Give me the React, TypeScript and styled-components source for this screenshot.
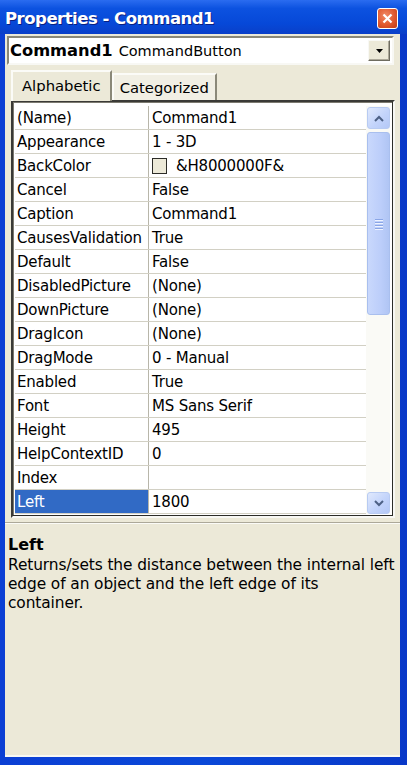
import { createGlobalStyle } from "styled-components";
import styled from "styled-components";

const GlobalStyle = createGlobalStyle`
  html, body {
    margin: 0;
    padding: 0;
    background: #0831d9;
  }
  * {
    box-sizing: border-box;
  }
`;

const uiFont = `"DejaVu Sans", "Liberation Sans", sans-serif`;

interface IPropRow {
  name: string;
  value: string;
  swatch?: boolean;
}

const rows: IPropRow[] = [
  { name: "(Name)", value: "Command1" },
  { name: "Appearance", value: "1 - 3D" },
  { name: "BackColor", value: "&H8000000F&", swatch: true },
  { name: "Cancel", value: "False" },
  { name: "Caption", value: "Command1" },
  { name: "CausesValidation", value: "True" },
  { name: "Default", value: "False" },
  { name: "DisabledPicture", value: "(None)" },
  { name: "DownPicture", value: "(None)" },
  { name: "DragIcon", value: "(None)" },
  { name: "DragMode", value: "0 - Manual" },
  { name: "Enabled", value: "True" },
  { name: "Font", value: "MS Sans Serif" },
  { name: "Height", value: "495" },
  { name: "HelpContextID", value: "0" },
  { name: "Index", value: "" },
  { name: "Left", value: "1800" },
];

const Window = styled.div`
  width: 407px;
  height: 765px;
  display: flex;
  flex-direction: column;
  background: linear-gradient(90deg, #0b3fd4 0%, #0a48d8 50%, #0838c8 100%);
  padding: 0 7px 8px 5px;
  font-family: ${uiFont};
`;

const TitleBar = styled.div`
  height: 34px;
  flex-shrink: 0;
  display: flex;
  align-items: center;
  justify-content: space-between;
  background: linear-gradient(180deg, #2a6cf0 0%, #0c52e0 25%, #0648d8 70%, #0a3fc8 100%);
  margin: 0 -7px 0 -5px;
  padding: 2px 9px 0 5px;
`;

const Title = styled.span`
  color: #ffffff;
  font-family: "DejaVu Sans", "Liberation Sans", sans-serif;
  font-weight: bold;
  font-size: 16.5px;
  letter-spacing: -0.5px;
  text-shadow: 1px 1px 0 #0a1f80;
`;

const CloseButton = styled.div`
  width: 21px;
  height: 21px;
  border: 1px solid #ffffff;
  border-radius: 3px;
  background: radial-gradient(circle at 40% 35%, #f08a66 0%, #e0582e 55%, #c23c14 100%);
  display: flex;
  align-items: center;
  justify-content: center;
  margin-top: 1px;
`;

const Body = styled.div`
  flex: 1;
  display: flex;
  flex-direction: column;
  background: #ece9d8;
  padding: 2px 0 0 2px;
  border-bottom: 2px solid #f8f8f4;
`;

const Combo = styled.div`
  width: 387px;
  height: 29px;
  flex-shrink: 0;
  background: #ffffff;
  border: 2px solid;
  border-color: #8a8878 #f8f8f4 #f8f8f4 #8a8878;
  display: flex;
  align-items: center;
  padding: 0 2px 0 1px;
  font-size: 14.5px;
  color: #000;
`;

const ComboName = styled.span`
  font-weight: bold;
  font-size: 16.3px;
  margin-right: 6px;
`;

const ComboType = styled.span`
  flex: 1;
`;

const DropButton = styled.div`
  width: 22px;
  height: 21px;
  background: #ece9d8;
  border: 1px solid;
  border-color: #f8f8f4 #6e6c60 #6e6c60 #f8f8f4;
  box-shadow: inset -1px -1px 0 #aca899;
  display: flex;
  align-items: center;
  justify-content: center;
`;

const TabRow = styled.div`
  display: flex;
  align-items: flex-end;
  height: 30px;
  flex-shrink: 0;
  margin-top: 5px;
  padding-left: 4px;
`;

const Tab = styled.div<{ $active?: boolean }>`
  height: ${(p) => (p.$active ? "31px" : "27px")};
  padding: 0 ${(p) => (p.$active ? "9px" : "6px")};
  display: flex;
  align-items: center;
  font-size: 14.8px;
  color: #000;
  background: ${(p) => (p.$active ? "#ece9d8" : "#f1efe4")};
  border-left: 2px solid #fbfbf7;
  border-top: 2px solid #fbfbf7;
  border-right: 2px solid #8a8878;
  margin-bottom: ${(p) => (p.$active ? "-1px" : "0")};
  position: relative;
  z-index: ${(p) => (p.$active ? 1 : 0)};
  padding-bottom: ${(p) => (p.$active ? "3px" : "0")};
`;

const GridFrame = styled.div`
  width: 384px;
  height: 418px;
  flex-shrink: 0;
  margin-left: 4px;
  border: 2px solid;
  border-color: #3a3a36 #f8f8f4 #f8f8f4 #3a3a36;
  box-shadow: inset -1px -1px 0 #2c2c28, inset 1px 1px 0 #7c7a70;
  background: #ffffff;
  display: flex;
  padding: 4px 3px 2px 2px;
`;

const RowList = styled.div`
  flex: 1;
  display: flex;
  flex-direction: column;
`;

const Row = styled.div`
  height: 24px;
  flex-shrink: 0;
  display: flex;
  border-bottom: 1px solid #d2d0c4;
  font-size: 15px;
  color: #000;
`;

const NameCell = styled.div<{ $selected?: boolean }>`
  width: 134px;
  display: flex;
  align-items: center;
  padding-left: 2px;
  background: ${(p) => (p.$selected ? "#316ac5" : "#ffffff")};
  color: ${(p) => (p.$selected ? "#ffffff" : "#000")};
  border-right: 1px solid #b8b6aa;
  white-space: nowrap;
  overflow: hidden;
  letter-spacing: -0.2px;
`;

const ValueCell = styled.div`
  flex: 1;
  display: flex;
  align-items: center;
  padding-left: 3px;
  gap: 9px;
  white-space: nowrap;
  letter-spacing: -0.2px;
`;

const Swatch = styled.span`
  width: 15px;
  height: 16px;
  border: 1px solid #2c2c28;
  background: #ece9d8;
`;

const ScrollBar = styled.div`
  width: 24px;
  display: flex;
  flex-direction: column;
  gap: 3px;
  padding: 1px 0 0 1px;
  background: #fafaf6;
`;

const ScrollButton = styled.div`
  height: 22px;
  flex-shrink: 0;
  border: 1px solid #b8cbf2;
  border-radius: 3px;
  background: linear-gradient(135deg, #e0e9fd 0%, #c3d4fb 55%, #b4c8f6 100%);
  display: flex;
  align-items: center;
  justify-content: center;
`;

const Thumb = styled.div`
  height: 183px;
  flex-shrink: 0;
  border: 1px solid #a9bfee;
  border-radius: 3px;
  background: linear-gradient(90deg, #c9d8fc 0%, #bccefa 60%, #b0c5f4 100%);
  display: flex;
  flex-direction: column;
  align-items: center;
  justify-content: center;
  gap: 2px;
`;

const Grip = styled.span`
  width: 8px;
  height: 1px;
  background: #8aa6e6;
  box-shadow: 0 1px 0 #eef3ff;
`;

const Track = styled.div`
  flex: 1;
`;

const Separator = styled.div`
  height: 2px;
  flex-shrink: 0;
  margin: 4px 0 0 -2px;
  border-top: 1px solid #aca899;
  border-bottom: 1px solid #fbfbf7;
`;

const Description = styled.div`
  padding: 11px 0 0 1px;
  color: #000;
`;

const DescTitle = styled.div`
  font-weight: bold;
  font-size: 16px;
  line-height: 19px;
  margin-bottom: 2px;
`;

const DescText = styled.div`
  max-width: 387px;
  font-size: 15.4px;
  line-height: 19px;
  letter-spacing: -0.1px;
`;

function Chevron({ up }: { up?: boolean }) {
  return (
    <svg width="10" height="7" viewBox="0 0 10 7">
      <path
        d={up ? "M1 6 L5 2 L9 6" : "M1 1 L5 5 L9 1"}
        fill="none"
        stroke="#4d6185"
        strokeWidth="2"
      />
    </svg>
  );
}

export default function App() {
  return (
    <>
      <GlobalStyle />
      <Window>
        <TitleBar>
          <Title>Properties - Command1</Title>
          <CloseButton>
            <svg width="11" height="11" viewBox="0 0 11 11">
              <path d="M1.5 1.5 L9.5 9.5 M9.5 1.5 L1.5 9.5" stroke="#fff" strokeWidth="2.2" />
            </svg>
          </CloseButton>
        </TitleBar>
        <Body>
          <Combo>
            <ComboName>Command1</ComboName>
            <ComboType>CommandButton</ComboType>
            <DropButton>
              <svg width="7" height="4" viewBox="0 0 7 4">
                <path d="M0 0 H7 L3.5 4 Z" fill="#000" />
              </svg>
            </DropButton>
          </Combo>
          <TabRow>
            <Tab $active>Alphabetic</Tab>
            <Tab>Categorized</Tab>
          </TabRow>
          <GridFrame>
            <RowList>
              {rows.map((r) => (
                <Row key={r.name}>
                  <NameCell $selected={r.name === "Left"}>{r.name}</NameCell>
                  <ValueCell>
                    {r.swatch && <Swatch />}
                    {r.value}
                  </ValueCell>
                </Row>
              ))}
            </RowList>
            <ScrollBar>
              <ScrollButton>
                <Chevron up />
              </ScrollButton>
              <Thumb>
                <Grip />
                <Grip />
                <Grip />
                <Grip />
              </Thumb>
              <Track />
              <ScrollButton>
                <Chevron />
              </ScrollButton>
            </ScrollBar>
          </GridFrame>
          <Separator />
          <Description>
            <DescTitle>Left</DescTitle>
            <DescText>
              Returns/sets the distance between the internal left edge of an
              object and the left edge of its container.
            </DescText>
          </Description>
        </Body>
      </Window>
    </>
  );
}
